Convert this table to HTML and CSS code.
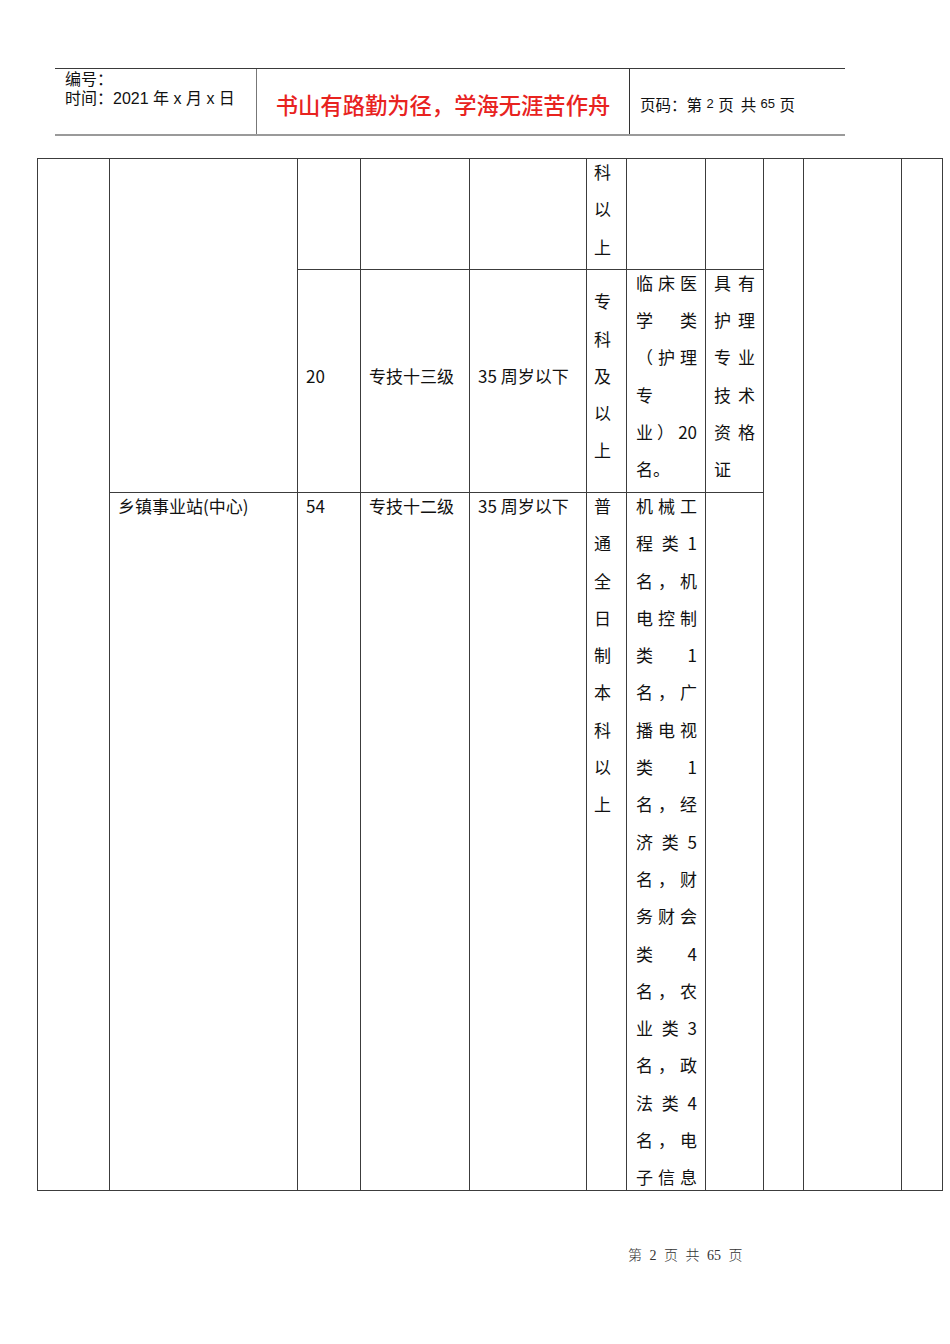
FILE: index.html
```html
<!DOCTYPE html>
<html lang="zh-CN">
<head>
<meta charset="utf-8">
<title>第2页</title>
<link rel="stylesheet" href="styles.css">
</head>
<body>
<div class="page">
  <div class="header">
    <div class="h-left">
      <div>编号：</div>
      <div>时间：2021 年 x 月 x 日</div>
    </div>
    <div class="h-mid">书山有路勤为径，学海无涯苦作舟</div>
    <div class="h-right">页码：第 <span class="num">2</span> 页&nbsp; 共 <span class="num">65</span> 页</div>
  </div>

  <div class="grid">
    <div class="cell c1 rall"></div>
    <div class="cell c2 rtop"></div>

    <div class="cell c3 r1"></div>
    <div class="cell c4 r1"></div>
    <div class="cell c5 r1"></div>
    <div class="cell c6 r1 narrow top"><div class="inner"><div>科</div><div>以</div><div>上</div></div></div>
    <div class="cell c7 r1"></div>
    <div class="cell c8 r1"></div>

    <div class="cell c3 r2 mid"><div>20</div></div>
    <div class="cell c4 r2 mid"><div>专技十三级</div></div>
    <div class="cell c5 r2 mid"><div>35 周岁以下</div></div>
    <div class="cell c6 r2 narrow mid">
      <div>专</div><div>科</div><div>及</div><div>以</div><div>上</div>
    </div>
    <div class="cell c7 r2 wide mid">
      <div class="jl"><span>临</span><span>床</span><span>医</span></div>
      <div class="jl"><span>学</span><span>类</span></div>
      <div class="jl"><span>（</span><span>护</span><span>理</span></div>
      <div class="jl"><span>专</span></div>
      <div class="jl"><span>业</span><span>）</span><span>20</span></div>
      <div class="jl"><span>名。</span></div>
    </div>
    <div class="cell c8 r2 mid">
      <div class="jl"><span>具</span><span>有</span></div>
      <div class="jl"><span>护</span><span>理</span></div>
      <div class="jl"><span>专</span><span>业</span></div>
      <div class="jl"><span>技</span><span>术</span></div>
      <div class="jl"><span>资</span><span>格</span></div>
      <div class="jl"><span>证</span></div>
    </div>

    <div class="cell c2 r3 top"><div class="inner">乡镇事业站(中心)</div></div>
    <div class="cell c3 r3 top"><div class="inner">54</div></div>
    <div class="cell c4 r3 top"><div class="inner">专技十二级</div></div>
    <div class="cell c5 r3 top"><div class="inner">35 周岁以下</div></div>
    <div class="cell c6 r3 narrow top"><div class="inner">
      <div>普</div><div>通</div><div>全</div><div>日</div><div>制</div><div>本</div><div>科</div><div>以</div><div>上</div>
    </div></div>
    <div class="cell c7 r3 wide top"><div class="inner">
      <div class="jl"><span>机</span><span>械</span><span>工</span></div>
      <div class="jl"><span>程</span><span>类</span><span>1</span></div>
      <div class="jl"><span>名</span><span>，</span><span>机</span></div>
      <div class="jl"><span>电</span><span>控</span><span>制</span></div>
      <div class="jl"><span>类</span><span>1</span></div>
      <div class="jl"><span>名</span><span>，</span><span>广</span></div>
      <div class="jl"><span>播</span><span>电</span><span>视</span></div>
      <div class="jl"><span>类</span><span>1</span></div>
      <div class="jl"><span>名</span><span>，</span><span>经</span></div>
      <div class="jl"><span>济</span><span>类</span><span>5</span></div>
      <div class="jl"><span>名</span><span>，</span><span>财</span></div>
      <div class="jl"><span>务</span><span>财</span><span>会</span></div>
      <div class="jl"><span>类</span><span>4</span></div>
      <div class="jl"><span>名</span><span>，</span><span>农</span></div>
      <div class="jl"><span>业</span><span>类</span><span>3</span></div>
      <div class="jl"><span>名</span><span>，</span><span>政</span></div>
      <div class="jl"><span>法</span><span>类</span><span>4</span></div>
      <div class="jl"><span>名</span><span>，</span><span>电</span></div>
      <div class="jl"><span>子</span><span>信</span><span>息</span></div>
    </div></div>
    <div class="cell c8 r3"></div>

    <div class="cell c9 rall"></div>
    <div class="cell c10 rall"></div>
    <div class="cell c11 rall"></div>
  </div>

  <div class="footer">第 <span class="fnum">2</span> 页 共 <span class="fnum">65</span> 页</div>
</div>
</body>
</html>
```

FILE: styles.css
```css
html, body {
  margin: 0;
  padding: 0;
  background: #ffffff;
}

body {
  font-family: "Noto Sans CJK SC", "Noto Sans", sans-serif;
  color: #111111;
}

.page {
  width: 950px;
  height: 1344px;
  overflow: hidden;
  padding-top: 68px;
  box-sizing: border-box;
}

/* ---------- header ---------- */
.header {
  margin-left: 55px;
  width: 790px;
  height: 68px;
  box-sizing: border-box;
  border-top: 1px solid #3a3a3a;
  border-bottom: 2px solid #9a9a9a;
  display: flex;
}

.h-left {
  width: 201px;
  box-sizing: border-box;
  padding: 1px 0 0 10px;
  font-family: "Liberation Sans", "Noto Sans CJK SC", sans-serif;
  font-size: 16px;
  line-height: 19px;
  color: #111111;
}

.h-mid {
  width: 373px;
  box-sizing: border-box;
  border-left: 1px solid #777777;
  display: flex;
  align-items: center;
  justify-content: center;
  padding-top: 4px;
  font-size: 22.3px;
  font-weight: 500;
  color: #e8231f;
}

.h-right {
  flex: 1;
  box-sizing: border-box;
  border-left: 1px solid #333333;
  display: flex;
  align-items: center;
  padding: 4px 0 0 10px;
  font-size: 15.5px;
  color: #111111;
  white-space: pre;
}

.h-right .num {
  font-family: "Liberation Sans", sans-serif;
  font-size: 13px;
  margin: 0 1px;
}

/* ---------- table grid ---------- */
.grid {
  margin-top: 22px;
  margin-left: 37px;
  width: max-content;
  display: grid;
  grid-template-columns: 71px 187px 62px 108px 116px 39px 78px 57px 39px 97px 40px;
  grid-template-rows: 110px 222px 697px;
  gap: 1px;
  padding: 1px;
  background: #3c3c3c;
}

.cell {
  background: #ffffff;
  overflow: hidden;
  padding: 0 8px;
  font-size: 17px;
  line-height: 37.3px;
  color: #111111;
  white-space: nowrap;
}

.c1 { grid-column: 1; }
.c2 { grid-column: 2; }
.c3 { grid-column: 3; }
.c4 { grid-column: 4; }
.c5 { grid-column: 5; }
.c6 { grid-column: 6; }
.c7 { grid-column: 7; }
.c8 { grid-column: 8; }
.c9 { grid-column: 9; }
.c10 { grid-column: 10; }
.c11 { grid-column: 11; }

.r1 { grid-row: 1; }
.r2 { grid-row: 2; }
.r3 { grid-row: 3; }
.rtop { grid-row: 1 / 3; }
.rall { grid-row: 1 / 4; }

.narrow { padding: 0 7px; }
.wide { padding: 0 8px 0 9px; }

.mid {
  display: flex;
  flex-direction: column;
  justify-content: center;
  padding-bottom: 11px;
}

.top .inner {
  margin-top: -6px;
}

.jl {
  display: flex;
  justify-content: space-between;
}

/* ---------- footer ---------- */
.footer {
  margin-top: 55px;
  padding-left: 628px;
  font-family: "Liberation Serif", "Noto Sans CJK SC", serif;
  font-size: 14px;
  line-height: 20px;
  font-weight: 300;
  color: #333333;
  word-spacing: 4px;
}

.footer .fnum {
  font-family: "Liberation Serif", serif;
  font-size: 14px;
}
```
